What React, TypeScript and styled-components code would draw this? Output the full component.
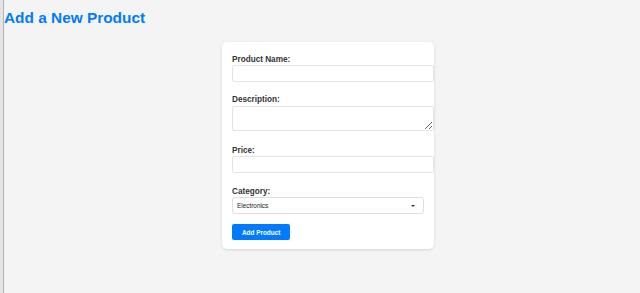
import React from "react";
import styled, { createGlobalStyle } from "styled-components";

const GlobalStyle = createGlobalStyle`
  html, body {
    margin: 0;
    padding: 0;
    background: #f4f4f4;
    font-family: "Liberation Sans", Arial, Helvetica, sans-serif;
  }
  * { font-family: "Liberation Sans", Arial, Helvetica, sans-serif; }
`;

const Page = styled.div`
  display: flex;
  min-height: 293px;
  background: #f4f4f4;
`;

const Rail = styled.div`
  width: 3px;
  flex: none;
  background: #e4e4e4;
  border-right: 1px solid #b4b4b4;
`;

const Main = styled.main`
  flex: 1;
  display: flex;
  flex-direction: column;
`;

const Title = styled.h1`
  margin: 9px 0 15px 0;
  font-size: 15.4px;
  line-height: 18px;
  font-weight: bold;
  color: #007bff;
`;

const Center = styled.div`
  display: flex;
  justify-content: center;
  padding-left: 12px;
`;

const Card = styled.form`
  width: 192px;
  padding: 13px 10px 9px;
  background: #fff;
  border-radius: 5px;
  box-shadow: 0 1px 3px rgba(0, 0, 0, 0.12);
  display: flex;
  flex-direction: column;
  align-items: flex-start;
`;

const Field = styled.div<{ $top: number }>`
  width: 100%;
  margin-top: ${(p) => p.$top}px;
  display: flex;
  flex-direction: column;
`;

const Label = styled.label<{ $gap?: number }>`
  display: block;
  font-size: 8.2px;
  line-height: 10px;
  font-weight: bold;
  color: #333;
  margin-bottom: ${(p) => p.$gap ?? 0}px;
`;

const TextInput = styled.input`
  display: block;
  box-sizing: content-box;
  width: 100%;
  height: 7px;
  padding: 4px;
  margin: 0;
  border: 1px solid #e4e4e4;
  border-radius: 2px;
  background: #fff;
  font-size: 7px;
  outline: none;
`;

const TextArea = styled.textarea`
  display: block;
  box-sizing: content-box;
  width: 100%;
  height: 15px;
  padding: 4px;
  margin: 0;
  border: 1px solid #e4e4e4;
  border-radius: 2px;
  background: #fff;
  font-size: 7px;
  outline: none;
`;

const SelectWrap = styled.div`
  position: relative;
  width: 100%;
`;

const Select = styled.select`
  display: block;
  appearance: none;
  -webkit-appearance: none;
  box-sizing: border-box;
  width: 100%;
  height: 17px;
  padding: 0 4px;
  margin: 0;
  border: 1px solid #dedede;
  border-radius: 3px;
  background: #fff;
  color: #222;
  font-size: 6.4px;
  outline: none;
`;

const Caret = styled.span`
  position: absolute;
  right: 9px;
  top: 8px;
  width: 0;
  height: 0;
  border-left: 2px solid transparent;
  border-right: 2px solid transparent;
  border-top: 2px solid #333;
  pointer-events: none;
`;

const Button = styled.button`
  margin-top: 10px;
  height: 16px;
  padding: 0 10px;
  border: none;
  border-radius: 2px;
  background: #007bff;
  color: #fff;
  font-size: 6.4px;
  font-weight: bold;
  cursor: pointer;
`;

export default function App() {
  return (
    <>
      <GlobalStyle />
      <Page>
        <Rail />
        <Main>
          <Title>Add a New Product</Title>
          <Center>
            <Card onSubmit={(e) => e.preventDefault()}>
              <Field $top={0}>
                <Label>Product Name:</Label>
                <TextInput type="text" />
              </Field>
              <Field $top={13}>
                <Label $gap={1}>Description:</Label>
                <TextArea />
              </Field>
              <Field $top={15}>
                <Label>Price:</Label>
                <TextInput type="text" />
              </Field>
              <Field $top={14}>
                <Label>Category:</Label>
                <SelectWrap>
                  <Select defaultValue="Electronics">
                    <option>Electronics</option>
                    <option>Clothing</option>
                    <option>Books</option>
                  </Select>
                  <Caret />
                </SelectWrap>
              </Field>
              <Button type="submit">Add Product</Button>
            </Card>
          </Center>
        </Main>
      </Page>
    </>
  );
}
